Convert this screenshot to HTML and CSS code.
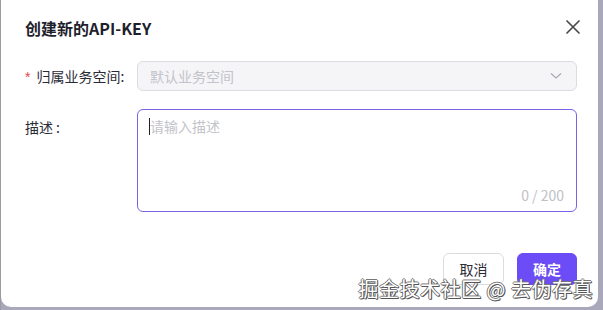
FILE: index.html
```html
<!DOCTYPE html>
<html lang="zh">
<head>
<meta charset="utf-8">
<link rel="stylesheet" href="styles.css">
</head>
<body>
<div class="dialog">
  <div class="header">
    <div class="title">创建新的API-KEY</div>
    <svg class="close" width="16" height="16" viewBox="0 0 16 16"><path d="M2 2 L14 14 M14 2 L2 14" stroke="#4a4a4a" stroke-width="1.7" stroke-linecap="round" fill="none"/></svg>
  </div>
  <div class="form">
    <div class="row">
      <div class="label"><span class="req">*</span>归属业务空间:</div>
      <div class="select">
        <span class="ph">默认业务空间</span>
        <svg width="12" height="8" viewBox="0 0 12 8"><path d="M1 1.5 L6 6 L11 1.5" stroke="#a8a8b0" stroke-width="1.2" fill="none"/></svg>
      </div>
    </div>
    <div class="row">
      <div class="label desc">描述<span class="colon">:</span></div>
      <div class="textarea">
        <div class="tline"><span class="caret"></span><span class="ph">请输入描述</span></div>
        <div class="count">0 / 200</div>
      </div>
    </div>
  </div>
  <div class="footer">
    <button class="btn cancel">取消</button>
    <button class="btn ok">确定</button>
  </div>
  <div class="watermark">掘金技术社区 @ 去伪存真</div>
</div>
</body>
</html>
```
FILE: styles.css
```css
html, body {
  margin: 0;
  padding: 0;
}
body {
  width: 603px;
  height: 310px;
  background: #a8a8ba;
  font-family: "Noto Sans CJK SC", "Noto Sans", sans-serif;
  overflow: hidden;
  border-left: 1px solid #9c9ca0;
  box-sizing: border-box;
}
.dialog {
  position: relative;
  width: 597px;
  height: 307px;
  background: #fff;
  border-radius: 0 0 10px 10px;
  box-sizing: border-box;
  padding: 16px 21px 0 24px;
}
.header {
  display: flex;
  align-items: center;
  justify-content: space-between;
  height: 24px;
}
.title {
  font-size: 16px;
  font-weight: 600;
  color: #1f1f2d;
  line-height: 24px;
}
.close {
  margin-right: -4px;
  margin-top: -2px;
}
.form {
  margin-top: 21px;
  display: flex;
  flex-direction: column;
  gap: 17px;
}
.row {
  display: flex;
  align-items: flex-start;
}
.label {
  width: 112px;
  flex: none;
  font-size: 14px;
  color: #2b2b36;
  line-height: 30px;
}
.req {
  color: #e5484d;
  margin-right: 6px;
  font-family: "Liberation Sans", sans-serif;
}
.select {
  width: 440px;
  height: 30px;
  box-sizing: border-box;
  border: 1px solid #dcdce0;
  background: #f5f5f7;
  border-radius: 6px;
  display: flex;
  align-items: center;
  justify-content: space-between;
  padding: 0 14px 0 12px;
}
.ph {
  font-size: 14px;
  color: #c3c3ca;
}
.desc {
  line-height: 36px;
}
.colon {
  margin-left: 3px;
}
.textarea {
  width: 440px;
  height: 103px;
  box-sizing: border-box;
  border: 1px solid #7a62e6;
  border-radius: 6px;
  display: flex;
  flex-direction: column;
  justify-content: space-between;
  padding: 4px 12px 5px 11px;
}
.tline {
  display: flex;
  align-items: center;
  height: 24px;
}
.caret {
  width: 1px;
  height: 17px;
  background: #222;
}
.count {
  align-self: flex-end;
  font-size: 14px;
  color: #c0c0c6;
  line-height: 22px;
}
.footer {
  margin-top: 41px;
  display: flex;
  justify-content: flex-end;
  gap: 13px;
}
.btn {
  height: 32px;
  border-radius: 6px;
  font-family: "Noto Sans CJK SC", sans-serif;
  font-size: 14px;
  padding: 0;
  cursor: pointer;
}
.cancel {
  width: 61px;
  background: #fff;
  border: 1px solid #dcdce0;
  color: #2b2b36;
}
.ok {
  width: 60px;
  background: #6b4cf6;
  border: 1px solid #6b4cf6;
  color: #fff;
  font-weight: 600;
}
.watermark {
  position: absolute;
  right: 5px;
  bottom: 5px;
  font-size: 20px;
  color: #fff;
  letter-spacing: 0.5px;
  text-shadow: 1px 1px 0 #555, -1px 0 0 #777, 0 -1px 0 #777, 1px 0 0 #666, 0 1px 0 #666;
  line-height: 26px;
}
```
